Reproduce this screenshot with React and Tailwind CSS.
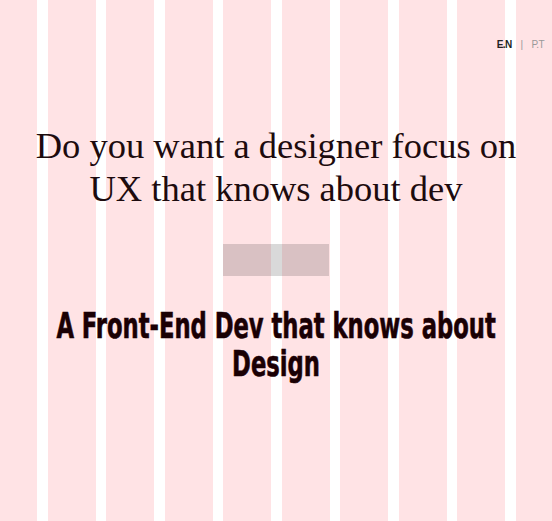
export default function App() {
  const cols = Array.from({ length: 10 })

  return (
    <div className="relative min-h-[521px] w-full overflow-hidden bg-white">
      <div className="absolute inset-0 grid grid-cols-[37px_repeat(8,minmax(0,1fr))_36px] gap-x-[10.6px]">
        {cols.map((_, i) => (
          <div key={i} className="bg-[#ffe3e5]" />
        ))}
      </div>

      <div className="relative flex flex-col">
        <div className="flex justify-end gap-[9px] pt-[39px] pr-[8px] text-[10px] leading-[12px] tracking-[-0.6px] font-['Liberation_Sans',sans-serif]">
          <span className="font-bold text-[#222]">E.N</span>
          <span className="text-[#999]">|</span>
          <span className="text-[#999]">P.T</span>
        </div>

        <h1 className="mt-[73px] text-center text-[36.5px] leading-[43px] text-[#1d0b0e] font-['Liberation_Serif',serif] font-normal">
          Do you want a designer focus on
          <br />
          UX that knows about dev
        </h1>

        <div className="mx-auto mt-[34px] h-[32px] w-[106px] bg-black/15" />

        <h2 className="mt-[31px] flex flex-col items-center text-[35px] leading-[38px] text-[#1a0004] font-['DejaVu_Sans_Condensed','DejaVu_Sans',sans-serif] font-bold [-webkit-text-stroke:0.6px_#1a0004]">
          <span className="inline-block origin-center scale-x-[0.72] whitespace-nowrap">
            A Front-End Dev that knows about
          </span>
          <span className="inline-block origin-center scale-x-[0.72] whitespace-nowrap">
            Design
          </span>
        </h2>
      </div>
    </div>
  )
}
